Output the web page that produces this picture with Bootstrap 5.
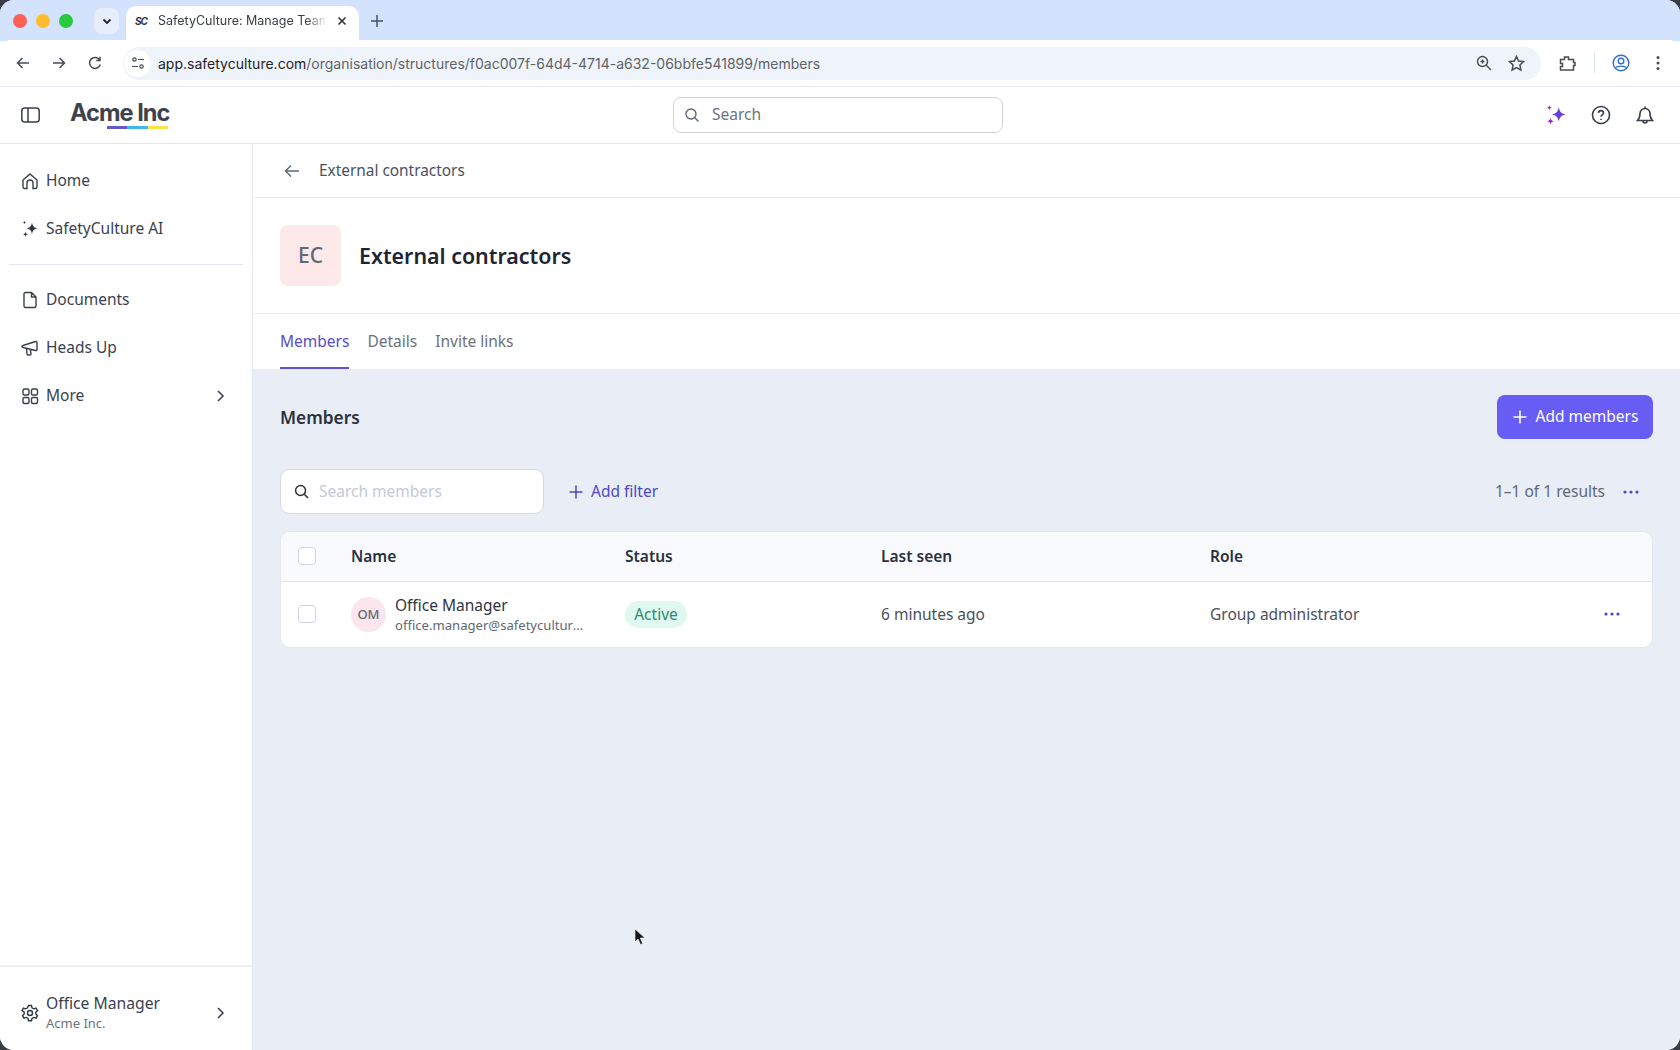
<!DOCTYPE html>
<html lang="en">

<head>
    <meta charset="UTF-8">
    <meta name="viewport" content="width=device-width, initial-scale=1.0">

    <link href="https://cdn.jsdelivr.net/npm/bootstrap@5.3.3/dist/css/bootstrap.min.css" rel="stylesheet">

    <title>SafetyCulture: Manage Teams</title>

    <style>
        html, body { height: 100%; }

        body {
            background: #3a3d45;
            overflow: hidden;
            font-family: "Noto Sans", sans-serif;
            color: #1f2533;
        }

        svg { display: block; flex: none; }

        .app-window {
            height: 1050px;
            width: 1680px;
            position: relative;
            border-radius: 14px;
            overflow: hidden;
            background: #fff;
        }

        /* browser chrome */
        .tab-strip {
            height: 41px;
            flex: none;
            background: #d3e3fd;
            padding-left: 13px;
        }

        .light-dot { width: 14px; height: 14px; border-radius: 50%; margin-right: 9px; }
        .dot-red { background: #ff5f57; }
        .dot-yellow { background: #febc2e; }
        .dot-green { background: #28c840; }

        .tab-menu {
            width: 25px;
            height: 26px;
            margin-left: 12px;
            border-radius: 8px;
            background: #e6eefb;
        }

        .chrome-tab {
            width: 233px;
            height: 35px;
            margin: 6px 0 0 7px;
            padding: 0 12px 6px 9px;
            background: #fff;
            border-radius: 10px 10px 0 0;
            font: 12.5px "Inter", sans-serif;
            color: #3c4043;
        }

        .tab-title {
            flex: 1;
            white-space: nowrap;
            overflow: hidden;
            margin: 0 10px 0 8px;
            -webkit-mask-image: linear-gradient(90deg, #000 88%, transparent);
            mask-image: linear-gradient(90deg, #000 88%, transparent);
        }

        .favicon-text {
            width: 15px;
            font: italic 700 10px "Inter", sans-serif;
            letter-spacing: -1px;
            color: #2a3040;
        }

        .new-tab { margin-left: 11px; }

        .tool-bar {
            height: 47px;
            flex: none;
            background: #fff;
            border-bottom: 1px solid #e4e7ee;
            border-radius: 10px 10px 0 0;
            margin-top: -1px;
            padding-left: 15px;
        }

        .tool-btn { width: 16px; margin-right: 20px; }

        .omni-box {
            width: 1418px;
            height: 33px;
            border-radius: 17px;
            background: #eff3fa;
            font: 14px "Inter", sans-serif;
            color: #5f6368;
        }

        .omni-tune {
            width: 27px;
            height: 27px;
            margin: 0 7px 0 1px;
            border-radius: 50%;
            background: #fff;
        }

        .omni-host { color: #1f2329; }

        .omni-right { width: 134px; padding-right: 16px; }

        .extension-icon { margin-left: 18px; }
        .tool-sep { display: block; width: 1px; height: 20px; margin-left: 18px; background: #d9e2f2; }
        .profile-icon { margin-left: 17px; }
        .chrome-dots { margin-left: 26px; }

        /* app */
        .app-bar {
            height: 57px;
            flex: none;
            border-bottom: 1px solid #e4e7ee;
            padding-left: 21px;
        }

        .brand-block { margin-left: 30px; width: 99px; }

        .brand-name {
            font: 700 23.600px/24px "Inter", sans-serif;
            letter-spacing: -1px;
            color: #3f424b;
            white-space: nowrap;
        }

        .brand-rule { margin: 1px 0 0 37px; height: 3px; width: 61px; }
        .brand-rule span { flex: 1; }
        .rule-a { background: #6559d0; }
        .rule-b { background: #3db8e8; }
        .rule-c { background: #fbe04a; }

        .top-search { width: 330px; margin-left: 504px; }

        .search-box {
            height: 36px;
            border: 1.5px solid #cfd3dc;
            border-radius: 8px;
            background: #fff;
            padding-left: 10px;
            color: #6b7280;
            font-size: 15.5px;
        }

        .bar-icons { margin-left: auto; gap: 24px; padding-right: 25px; }

        .side-nav {
            width: 253px;
            flex: none;
            border-right: 1px solid #e4e7ee;
            padding: 13px 9px 0 0;
            background: #fff;
        }

        .side-link {
            height: 48px;
            padding-left: 21px;
            gap: 7px;
            font-size: 15.5px;
            color: #3a4150;
            text-decoration: none;
        }

        .side-rule { margin: 11px 0 11px 9px; border-top: 1px solid #e4e7ee; opacity: 1; }

        .side-chevron { margin-left: auto; margin-right: 18px; }

        .side-user {
            border-top: 2px solid #f0f1f6;
            height: 85px;
            margin-right: -9px;
            padding: 8px 27px 0 21px;
            gap: 7px;
        }

        .user-name { font-size: 15.7px; line-height: 21px; color: #3a4150; }
        .user-org { font-size: 13px; line-height: 18px; color: #6b7280; }

        .page-back {
            height: 54px;
            border-bottom: 1px solid #e8eaf0;
            padding-left: 31px;
            gap: 19px;
            font-size: 15.4px;
            color: #4a5160;
        }

        .page-title {
            height: 116px;
            border-bottom: 1px solid #e8eaf0;
            padding-left: 27px;
            gap: 18px;
        }

        .group-tile {
            width: 61px;
            height: 61px;
            border-radius: 8px;
            background: #fde8ea;
            font-size: 21px;
            font-weight: 500;
            color: #5f6875;
        }

        .title-text {
            margin: 0;
            font-size: 21.4px;
            font-weight: 600;
            color: #1f2533;
        }

        .page-tabs {
            height: 55px;
            padding-left: 27px;
            gap: 18px;
            flex: none;
            font-size: 15.5px;
        }

        .page-tabs .nav-link {
            padding: 0;
            height: 55px;
            line-height: 55px;
            color: #6b7280;
        }

        .page-tabs .nav-link.active {
            color: #564bd1;
            border-bottom: 2px solid #5b50e0;
        }

        .members-pane {
            background: #e9edf6;
            padding: 26px 27px 0 27px;
        }

        .pane-head { height: 44px; }

        .pane-title { margin: 2px 0 0; font-size: 17.3px; font-weight: 600; color: #2a303d; }

        .add-btn {
            width: 156px;
            height: 44px;
            gap: 8px;
            padding: 0;
            border: none;
            border-radius: 8px;
            background: #675df4;
            color: #fff;
            font-size: 15.5px;
        }

        .filter-row { margin-top: 30px; height: 45px; }

        .member-search {
            width: 264px;
            height: 45px;
            border: 1.5px solid #d3d8e3;
            border-radius: 9px;
            background: #fff;
            padding-left: 13px;
            gap: 10px;
        }

        .member-search .form-control {
            border: 0;
            padding: 0;
            background: transparent;
            box-shadow: none;
            font-size: 15.5px;
        }

        .member-search .form-control::placeholder { color: #c4c9d6; opacity: 1; }

        .add-filter {
            margin-left: 25px;
            gap: 8px;
            color: #4f46c8;
            font-size: 15.5px;
            text-decoration: none;
        }

        .result-count { margin-left: auto; font-size: 15.5px; color: #5f6875; }

        .more-dots { margin-left: 18px; margin-right: 14px; }

        .member-card {
            margin-top: 17px;
            border-radius: 10px;
            border: 1px solid #e4e7f0;
            background: #fff;
            overflow: hidden;
        }

        .member-table { table-layout: fixed; margin: 0; }

        .member-table th, .member-table td {
            padding: 0;
            vertical-align: middle;
            background: transparent;
            box-shadow: none;
        }

        .member-table th {
            height: 49px;
            background: #f9fafd;
            font-size: 15.5px;
            font-weight: 600;
            color: #2a303d;
            border-bottom: 1px solid #e1e5ee;
        }

        .member-table td {
            height: 66px;
            border: 0;
            font-size: 15.5px;
            color: #4a5160;
        }

        .check-cell { padding-left: 17px !important; }

        .check-cell .form-check-input {
            display: block;
            width: 18px;
            height: 18px;
            margin: 0;
            border: 1.5px solid #cfd4e0;
            border-radius: 4px;
        }

        .person-row { gap: 9px; }

        .person-tile {
            width: 35px;
            height: 35px;
            border-radius: 50%;
            background: #fbe6ee;
            font-size: 13px;
            font-weight: 500;
            color: #5f6875;
        }

        .person-name { font-size: 15.5px; line-height: 21px; color: #2f3542; }
        .person-mail { font-size: 13.100px; line-height: 18px; color: #5f6875; width: 191px; }

        .status-pill {
            padding: 0;
            width: 62px;
            height: 27px;
            line-height: 27px;
            background: #dff8f0;
            color: #2f8a6b;
            font-size: 15.5px;
            font-weight: 400;
        }

        .end-cell svg { margin-left: auto; margin-right: 32px; }

        .mouse-arrow { position: absolute; left: 634px; top: 928px; }
    </style>
</head>

<body>
    <div class="app-window d-flex flex-column">

        <!-- barra del navegador -->
        <div class="tab-strip d-flex align-items-center">
            <span class="light-dot dot-red"></span>
            <span class="light-dot dot-yellow"></span>
            <span class="light-dot dot-green"></span>
            <span class="tab-menu d-flex align-items-center justify-content-center">
                <svg width="12" height="12" viewBox="0 0 12 12" fill="none" stroke="#1f2329" stroke-width="1.8"><path d="M2.5 4.5 6 8l3.5-3.5"/></svg>
            </span>
            <div class="chrome-tab d-flex align-items-center align-self-start">
                <span class="favicon-text">SC</span>
                <span class="tab-title">SafetyCulture: Manage Teams</span>
                <svg width="10" height="10" viewBox="0 0 10 10" stroke="#2a2d33" stroke-width="1.5"><path d="M1.5 1.5l7 7M8.500 1.5l-7 7"/></svg>
            </div>
            <svg class="new-tab" width="14" height="14" viewBox="0 0 14 14" stroke="#45506a" stroke-width="1.5"><path d="M7 1v12M1 7h12"/></svg>
        </div>

        <div class="tool-bar d-flex align-items-center">
            <svg class="tool-btn" width="16" height="16" viewBox="0 0 16 16" fill="none" stroke="#474c55" stroke-width="1.5"><path d="M14 8H2.500M7.500 3 2.500 8l5 5"/></svg>
            <svg class="tool-btn" width="16" height="16" viewBox="0 0 16 16" fill="none" stroke="#474c55" stroke-width="1.5"><path d="M2 8h11.500M8.500 3l5 5-5 5"/></svg>
            <svg class="tool-btn" width="16" height="16" viewBox="0 0 16 16" fill="none" stroke="#474c55" stroke-width="1.5"><path d="M13.300 9.500A5.500 5.500 0 1 1 12.600 4.800M13 1.800v3.700H9.300"/></svg>
            <div class="omni-box d-flex align-items-center">
                <span class="omni-tune d-flex align-items-center justify-content-center">
                    <svg width="14" height="14" viewBox="0 0 14 14" fill="none" stroke="#474c55" stroke-width="1.2"><circle cx="3.500" cy="3.500" r="1.700"/><circle cx="10.500" cy="10.500" r="1.700"/><path d="M7 3.500h6M1 10.500h6"/></svg>
                </span>
                <span class="flex-grow-1"><span class="omni-host">app.safetyculture.com</span>/organisation/structures/f0ac007f-64d4-4714-a632-06bbfe541899/members</span>
                <span class="omni-right d-flex align-items-center justify-content-end">
                    <svg width="16" height="16" viewBox="0 0 16 16" fill="none" stroke="#474c55" stroke-width="1.4"><circle cx="6.500" cy="6.500" r="5"/><path d="M10 10l5 5M4.500 6.500h4M6.500 4.500v4"/></svg>
                    <svg class="ms-3" width="17" height="17" viewBox="0 0 17 17" fill="none" stroke="#474c55" stroke-width="1.5"><path d="M8.500 1.500l2.100 4.600 5 .5-3.700 3.400 1 5-4.400-2.500L4.100 15l1-5-3.700-3.400 5-.5z"/></svg>
                </span>
            </div>
            <svg class="extension-icon" width="17" height="17" viewBox="0 0 17 17" fill="none" stroke="#474c55" stroke-width="1.5"><path d="M1.500 4.500h4V2h4v2.500h5v3h1.500v3h-1.500v4.500h-13v-3.500h2v-3h-2z"/></svg>
            <span class="tool-sep"></span>
            <svg class="profile-icon" width="18" height="18" viewBox="0 0 18 18" fill="none" stroke="#2f6fcf" stroke-width="1.4"><circle cx="9" cy="9" r="7.800"/><circle cx="9" cy="7" r="2.800"/><path d="M3.500 14c1.500-2.500 9.500-2.500 11 0"/></svg>
            <svg class="chrome-dots" width="4" height="16" viewBox="0 0 4 16" fill="#474c55"><circle cx="2" cy="2.500" r="1.500"/><circle cx="2" cy="8" r="1.500"/><circle cx="2" cy="13.500" r="1.500"/></svg>
        </div>

        <!-- cabecera de la app -->
        <div class="app-bar d-flex align-items-center">
            <svg width="19" height="16" viewBox="0 0 19 16" fill="none" stroke="#3a3f4a" stroke-width="1.5"><rect x=".8" y="1" width="17.400" height="14" rx="3"/><path d="M7 1v14"/></svg>
            <div class="brand-block">
                <div class="brand-name">Acme Inc</div>
                <div class="brand-rule d-flex"><span class="rule-a"></span><span class="rule-b"></span><span class="rule-c"></span></div>
            </div>
            <div class="top-search">
                <div class="search-box d-flex align-items-center gap-2">
                    <svg width="16" height="16" viewBox="0 0 16 16" fill="none" stroke="#5f6875" stroke-width="1.4"><circle cx="7" cy="7" r="5"/><path d="M10.800 10.800 14.500 14.500"/></svg>
                    <span class="ms-1">Search</span>
                </div>
            </div>
            <div class="bar-icons d-flex align-items-center">
                <svg width="22" height="22" viewBox="0 0 20 20"><path d="M12.500 3c.8 4 2.200 5.700 6 6.500-3.800.8-5.200 2.500-6 6.500-.8-4-2.200-5.700-6-6.500 3.800-.8 5.200-2.500 6-6.500z" fill="#6a3bd6"/><path d="M4 1c.3 1.500.8 2 2.300 2.300C4.800 3.600 4.300 4.100 4 5.600 3.700 4.100 3.200 3.600 1.700 3.300 3.200 3 3.700 2.500 4 1z" fill="#c026d3"/><path d="M5 12.500c.4 2 1 2.700 3 3.100-2 .4-2.600 1-3 3.100-.4-2-1-2.700-3-3.100 2-.4 2.600-1 3-3.100z" fill="#a21fd0"/></svg>
                <svg width="20" height="20" viewBox="0 0 20 20" fill="none" stroke="#3a3f4a" stroke-width="1.600"><circle cx="10" cy="10" r="8.500"/><path d="M7.500 8c0-3.200 5-3.200 5 0 0 1.800-2.500 1.900-2.500 3.800"/><path d="M10 13.800v1.200"/></svg>
                <svg width="20" height="20" viewBox="0 0 20 20" fill="none" stroke="#3a3f4a" stroke-width="1.600"><path d="M10 1.500v1.500M5 8.500a5 5 0 0 1 10 0c0 4 1 5.500 2.500 7h-15C4 14 5 12.500 5 8.500zM8 15.500v.5a2 2 0 0 0 4 0v-.5"/></svg>
            </div>
        </div>

        <div class="d-flex flex-grow-1" style="min-height:0">

            <!-- menú lateral -->
            <aside class="side-nav d-flex flex-column">
                <a class="side-link d-flex align-items-center" href="#">
                    <svg width="18" height="18" viewBox="0 0 18 18" fill="none" stroke="#3a3f4a" stroke-width="1.400"><path d="M2 8l7-6 7 6v7a1.500 1.500 0 0 1-1.500 1.500h-2.500V11a3 3 0 0 0-6 0v5.500H3.500A1.500 1.500 0 0 1 2 15z"/></svg>
                    Home
                </a>
                <a class="side-link d-flex align-items-center" href="#">
                    <svg width="18" height="18" viewBox="0 0 18 18" fill="#2f3542"><path d="M11 2.500c.7 3.800 2 5.100 5.700 5.800-3.700.7-5 2-5.700 5.800-.7-3.800-2-5.100-5.700-5.800 3.700-.7 5-2 5.700-5.800z"/><path d="M3.500.8c.2 1.200.6 1.600 1.800 1.800-1.200.2-1.600.6-1.800 1.800-.2-1.200-.6-1.600-1.800-1.800C2.900 2.400 3.300 2 3.500.8z"/><path d="M4.500 11.500c.3 1.800.9 2.400 2.700 2.700-1.800.3-2.400.9-2.700 2.700-.3-1.800-.9-2.400-2.700-2.700 1.800-.3 2.400-.9 2.700-2.700z"/></svg>
                    SafetyCulture AI
                </a>
                <hr class="side-rule">
                <a class="side-link d-flex align-items-center" href="#">
                    <svg width="18" height="18" viewBox="0 0 18 18" fill="none" stroke="#3a3f4a" stroke-width="1.400"><path d="M4.500 1.500h6l4.500 4.500v9a1.500 1.500 0 0 1-1.500 1.500h-9A1.500 1.500 0 0 1 3 15V3a1.500 1.500 0 0 1 1.500-1.500zM10.500 1.500V6H15"/></svg>
                    Documents
                </a>
                <a class="side-link d-flex align-items-center" href="#">
                    <svg width="18" height="18" viewBox="0 0 18 18" fill="none" stroke="#3a3f4a" stroke-width="1.400"><path d="M2 6.500 14.500 2.500a1 1 0 0 1 1.500 1v7a1 1 0 0 1-1.500 1L2 8.500a1 1 0 0 1 0-2zM5.500 9.500l.5 5.500a1 1 0 0 0 1 1h2a1 1 0 0 0 1-1.200L9.300 10.700"/></svg>
                    Heads Up
                </a>
                <a class="side-link d-flex align-items-center" href="#">
                    <svg width="18" height="18" viewBox="0 0 18 18" fill="none" stroke="#3a3f4a" stroke-width="1.400"><rect x="2" y="2" width="6" height="6" rx="1.500"/><rect x="10.500" y="2" width="6" height="6" rx="1.500"/><rect x="2" y="10.500" width="6" height="6" rx="1.500"/><rect x="10.500" y="10.500" width="6" height="6" rx="1.500"/></svg>
                    More
                    <svg class="side-chevron" width="9" height="14" viewBox="0 0 9 14" fill="none" stroke="#3a3f4a" stroke-width="1.500"><path d="M2 2l5 5-5 5"/></svg>
                </a>
                <div class="side-user d-flex align-items-center mt-auto">
                    <svg width="18" height="18" viewBox="0 0 18 18" fill="none" stroke="#2f3542" stroke-width="1.400"><circle cx="9" cy="9" r="2.500"/><path d="M7.500 1.500h3l.5 2.300 1.800 1 2.200-.8 1.500 2.600-1.700 1.600v1.800l1.700 1.600-1.500 2.600-2.200-.8-1.800 1-.5 2.300h-3l-.5-2.300-1.800-1-2.200.8-1.500-2.600 1.700-1.600V8.200L1 6.600l1.500-2.600 2.200.8 1.800-1z"/></svg>
                    <div>
                        <div class="user-name">Office Manager</div>
                        <div class="user-org">Acme Inc.</div>
                    </div>
                    <svg class="ms-auto" width="9" height="14" viewBox="0 0 9 14" fill="none" stroke="#3a3f4a" stroke-width="1.500"><path d="M2 2l5 5-5 5"/></svg>
                </div>
            </aside>

            <!-- contenido -->
            <main class="d-flex flex-column flex-grow-1" style="min-width:0">
                <div class="page-back d-flex align-items-center flex-shrink-0">
                    <svg width="16" height="16" viewBox="0 0 16 16" fill="none" stroke="#5f6875" stroke-width="1.400"><path d="M15 8H1.500M7 2.500 1.500 8 7 13.500"/></svg>
                    External contractors
                </div>
                <div class="page-title d-flex align-items-center flex-shrink-0">
                    <div class="group-tile d-flex align-items-center justify-content-center">EC</div>
                    <h1 class="title-text">External contractors</h1>
                </div>
                <nav class="nav page-tabs">
                    <a class="nav-link active" href="#">Members</a>
                    <a class="nav-link" href="#">Details</a>
                    <a class="nav-link" href="#">Invite links</a>
                </nav>
                <section class="members-pane flex-grow-1">
                    <div class="pane-head d-flex align-items-center justify-content-between">
                        <h2 class="pane-title">Members</h2>
                        <button class="btn add-btn d-flex align-items-center justify-content-center" type="button">
                            <svg width="16" height="16" viewBox="0 0 16 16" stroke="#fff" stroke-width="1.600"><path d="M8 1.500v13M1.500 8h13"/></svg>
                            Add members
                        </button>
                    </div>
                    <div class="filter-row d-flex align-items-center">
                        <div class="member-search d-flex align-items-center">
                            <svg width="15" height="15" viewBox="0 0 16 16" fill="none" stroke="#2a303d" stroke-width="1.600"><circle cx="7" cy="7" r="5.300"/><path d="M11 11l4 4"/></svg>
                            <input class="form-control" type="text" placeholder="Search members">
                        </div>
                        <a class="add-filter d-flex align-items-center" href="#">
                            <svg width="14" height="14" viewBox="0 0 14 14" stroke="#4f46c8" stroke-width="1.500"><path d="M7 .5v13M.5 7h13"/></svg>
                            Add filter
                        </a>
                        <span class="result-count">1–1 of 1 results</span>
                        <svg class="more-dots" width="16" height="4" viewBox="0 0 16 4" fill="#4f46c8"><circle cx="2" cy="2" r="1.600"/><circle cx="8" cy="2" r="1.600"/><circle cx="14" cy="2" r="1.600"/></svg>
                    </div>
                    <div class="member-card">
                        <table class="table member-table">
                            <colgroup>
                                <col style="width:70px">
                                <col style="width:274px">
                                <col style="width:256px">
                                <col style="width:329px">
                                <col>
                                <col style="width:150px">
                            </colgroup>
                            <thead>
                                <tr>
                                    <th class="check-cell"><input class="form-check-input" type="checkbox"></th>
                                    <th>Name</th>
                                    <th>Status</th>
                                    <th>Last seen</th>
                                    <th>Role</th>
                                    <th></th>
                                </tr>
                            </thead>
                            <tbody>
                                <tr>
                                    <td class="check-cell"><input class="form-check-input" type="checkbox"></td>
                                    <td>
                                        <div class="person-row d-flex align-items-center">
                                            <div class="person-tile d-flex align-items-center justify-content-center flex-shrink-0">OM</div>
                                            <div>
                                                <div class="person-name">Office Manager</div>
                                                <div class="person-mail text-truncate">office.manager@safetyculture.io</div>
                                            </div>
                                        </div>
                                    </td>
                                    <td><span class="badge rounded-pill status-pill">Active</span></td>
                                    <td>6 minutes ago</td>
                                    <td>Group administrator</td>
                                    <td class="end-cell"><svg width="16" height="4" viewBox="0 0 16 4" fill="#4f46c8"><circle cx="2" cy="2" r="1.600"/><circle cx="8" cy="2" r="1.600"/><circle cx="14" cy="2" r="1.600"/></svg></td>
                                </tr>
                            </tbody>
                        </table>
                    </div>
                </section>
            </main>
        </div>

        <svg class="mouse-arrow" width="12" height="18" viewBox="0 0 12 18"><path d="M1 1v13l3-3 2.500 5.500 2.200-1L6.300 10H11z" fill="#14161c" stroke="#fff" stroke-width=".6"/></svg>
    </div>

    <script src="https://cdn.jsdelivr.net/npm/bootstrap@5.3.3/dist/js/bootstrap.bundle.min.js"></script>
</body>

</html>
